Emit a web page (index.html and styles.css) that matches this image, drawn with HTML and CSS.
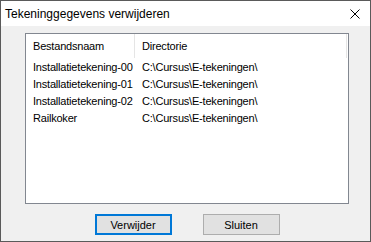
FILE: index.html
```html
<!DOCTYPE html>
<html lang="nl">
<head>
    <meta charset="UTF-8">
    <title>Tekeninggegevens verwijderen</title>
    <link rel="stylesheet" href="styles.css">
</head>
<body>
    <div class="window">
        <div class="titlebar">
            <span class="title">Tekeninggegevens verwijderen</span>
            <svg class="close" width="10" height="10" viewBox="0 0 10 10">
                <path d="M0.5 0.5 L9.5 9.5 M9.5 0.5 L0.5 9.5" stroke="#000" stroke-width="1" fill="none"/>
            </svg>
        </div>
        <div class="content">
            <div class="listview">
                <div class="header">
                    <div class="col name">Bestandsnaam</div>
                    <div class="col dir">Directorie</div>
                </div>
                <div class="row"><div class="col name">Installatietekening-00</div><div class="col dir">C:\Cursus\E-tekeningen\</div></div>
                <div class="row"><div class="col name">Installatietekening-01</div><div class="col dir">C:\Cursus\E-tekeningen\</div></div>
                <div class="row"><div class="col name">Installatietekening-02</div><div class="col dir">C:\Cursus\E-tekeningen\</div></div>
                <div class="row"><div class="col name">Railkoker</div><div class="col dir">C:\Cursus\E-tekeningen\</div></div>
            </div>
            <div class="buttons">
                <button class="btn default">Verwijder</button>
                <button class="btn">Sluiten</button>
            </div>
        </div>
    </div>
</body>
</html>
```
FILE: styles.css
```css
* {
    margin: 0;
    padding: 0;
    box-sizing: border-box;
}

body {
    background: #f0f0f0;
}

.window {
    width: 371px;
    height: 242px;
    border: 1px solid #5a5a5a;
    background: #f0f0f0;
    display: flex;
    flex-direction: column;
}

.titlebar {
    height: 25px;
    background: #fff;
    display: flex;
    align-items: center;
    justify-content: space-between;
    padding: 0 10px 0 4px;
}

.title {
    font-family: "Liberation Sans", Arial, sans-serif;
    font-size: 12px;
    color: #000;
}

.close {
    display: block;
}

.content {
    flex: 1;
    padding: 7px 21px 0 24px;
    display: flex;
    flex-direction: column;
}

.listview {
    height: 171px;
    border: 1px solid #828790;
    background: #fff;
    font-family: "Liberation Sans", Arial, sans-serif;
    font-size: 11px;
    letter-spacing: -0.2px;
    color: #000;
}

.header {
    display: flex;
    height: 24px;
    align-items: center;
    margin-right: 1px;
}

.header .col {
    height: 100%;
    display: flex;
    align-items: center;
}

.header .name {
    border-right: 1px solid #e5e5e5;
}

.header .dir {
    flex: 1;
    border-right: 1px solid #e5e5e5;
}

.col.name {
    width: 109px;
    padding-left: 7px;
    white-space: nowrap;
}

.col.dir {
    padding-left: 7px;
    white-space: nowrap;
}

.row {
    display: flex;
    height: 17px;
    align-items: center;
}

.row:first-of-type {
    margin-top: 1px;
}

.buttons {
    display: flex;
    justify-content: center;
    gap: 31px;
    margin-top: 10px;
}

.btn {
    width: 77px;
    height: 21px;
    background: #e1e1e1;
    border: 1px solid #adadad;
    font-family: "Liberation Sans", Arial, sans-serif;
    font-size: 11px;
    color: #000;
}

.btn.default {
    border: 2px solid #0078d7;
}
```
